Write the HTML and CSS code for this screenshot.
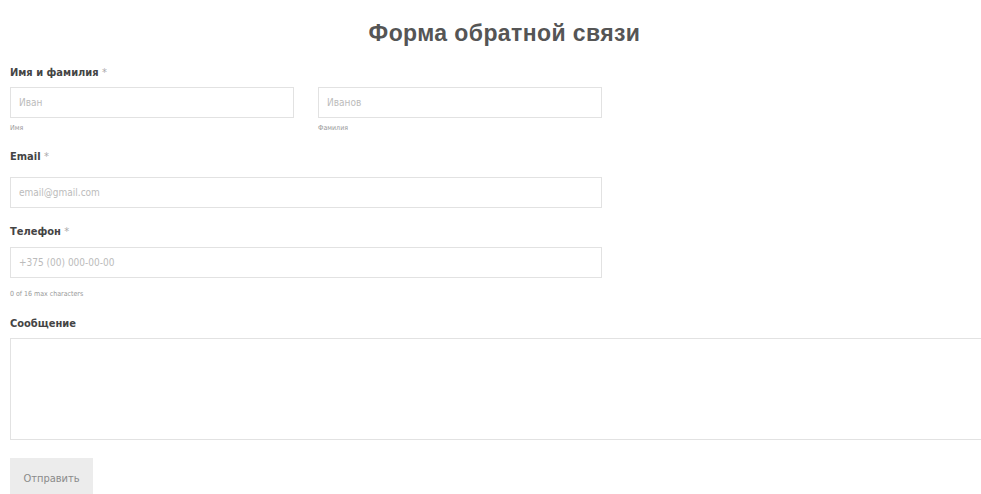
FILE: index.html
```html
<!DOCTYPE html>
<html lang="ru">
<head>
<meta charset="utf-8">
<title>Форма обратной связи</title>
<link rel="stylesheet" href="styles.css">
</head>
<body>
<main class="page">
  <h1 class="title">Форма обратной связи</h1>
  <form class="form">
    <div class="field">
      <div class="label">Имя и фамилия <span class="req">*</span></div>
      <div class="name-row">
        <div class="name-col">
          <input class="input" type="text" placeholder="Иван">
          <div class="sub">Имя</div>
        </div>
        <div class="name-col">
          <input class="input" type="text" placeholder="Иванов">
          <div class="sub">Фамилия</div>
        </div>
      </div>
    </div>
    <div class="field field-email">
      <div class="label">Email <span class="req">*</span></div>
      <input class="input" type="text" placeholder="email@gmail.com">
    </div>
    <div class="field field-phone">
      <div class="label">Телефон <span class="req">*</span></div>
      <input class="input" type="text" placeholder="+375 (00) 000-00-00">
      <div class="sub hint">0 of 16 max characters</div>
    </div>
    <div class="field field-msg">
      <div class="label">Сообщение</div>
      <textarea class="textarea"></textarea>
    </div>
    <button class="btn" type="button">Отправить</button>
  </form>
</main>
</body>
</html>
```

FILE: styles.css
```css
html, body {
  margin: 0;
  padding: 0;
  background: #fff;
  overflow: hidden;
}

.page {
  font-family: "DejaVu Sans Condensed", "Liberation Sans", sans-serif;
  color: #444;
  padding: 0 0 0 10px;
}

.title {
  margin: 0;
  padding: 19px 0 0 18px;
  height: 28px;
  line-height: 28px;
  text-align: center;
  font-family: "Liberation Sans", Arial, sans-serif;
  font-weight: 700;
  font-size: 23px;
  letter-spacing: 0.4px;
  color: #555;
}

.form {
  margin-top: 19px;
}

.label {
  font-weight: 700;
  font-size: 11px;
  line-height: 14px;
  height: 14px;
  color: #444;
  margin-bottom: 7px;
}

.req {
  color: #aaa;
  font-weight: 400;
}

.name-row {
  display: flex;
  gap: 24px;
  width: 592px;
}

.name-col {
  flex: 1;
}

.input {
  display: block;
  box-sizing: border-box;
  width: 592px;
  height: 31px;
  margin: 0;
  padding: 0 8px;
  border: 1px solid #e2e2e2;
  border-radius: 0;
  font-family: "DejaVu Sans Condensed", sans-serif;
  font-size: 10px;
  color: #444;
  background: #fff;
  outline: none;
}

.name-col .input {
  width: 100%;
}

.input::placeholder {
  color: #bbb;
}

.sub {
  font-size: 7px;
  line-height: 10px;
  color: #999;
  margin-top: 5px;
}

.field-email {
  margin-top: 17px;
}

.field-email .label {
  margin-bottom: 13px;
}

.field-phone {
  margin-top: 17px;
}

.field-phone .label {
  margin-bottom: 8px;
}

.hint {
  margin-top: 11px;
}

.field-msg {
  margin-top: 18px;
}

.field-msg .label {
  margin-bottom: 7px;
}

.textarea {
  display: block;
  box-sizing: border-box;
  width: 990px;
  height: 102px;
  margin: 0;
  border: 1px solid #e2e2e2;
  border-radius: 0;
  resize: none;
  outline: none;
}

.btn {
  display: block;
  margin-top: 18px;
  width: 83px;
  height: 40px;
  border: none;
  border-radius: 0;
  background: #ececec;
  color: #8a8a8a;
  font-family: "DejaVu Sans Condensed", sans-serif;
  font-size: 11px;
  padding: 0;
}
```
